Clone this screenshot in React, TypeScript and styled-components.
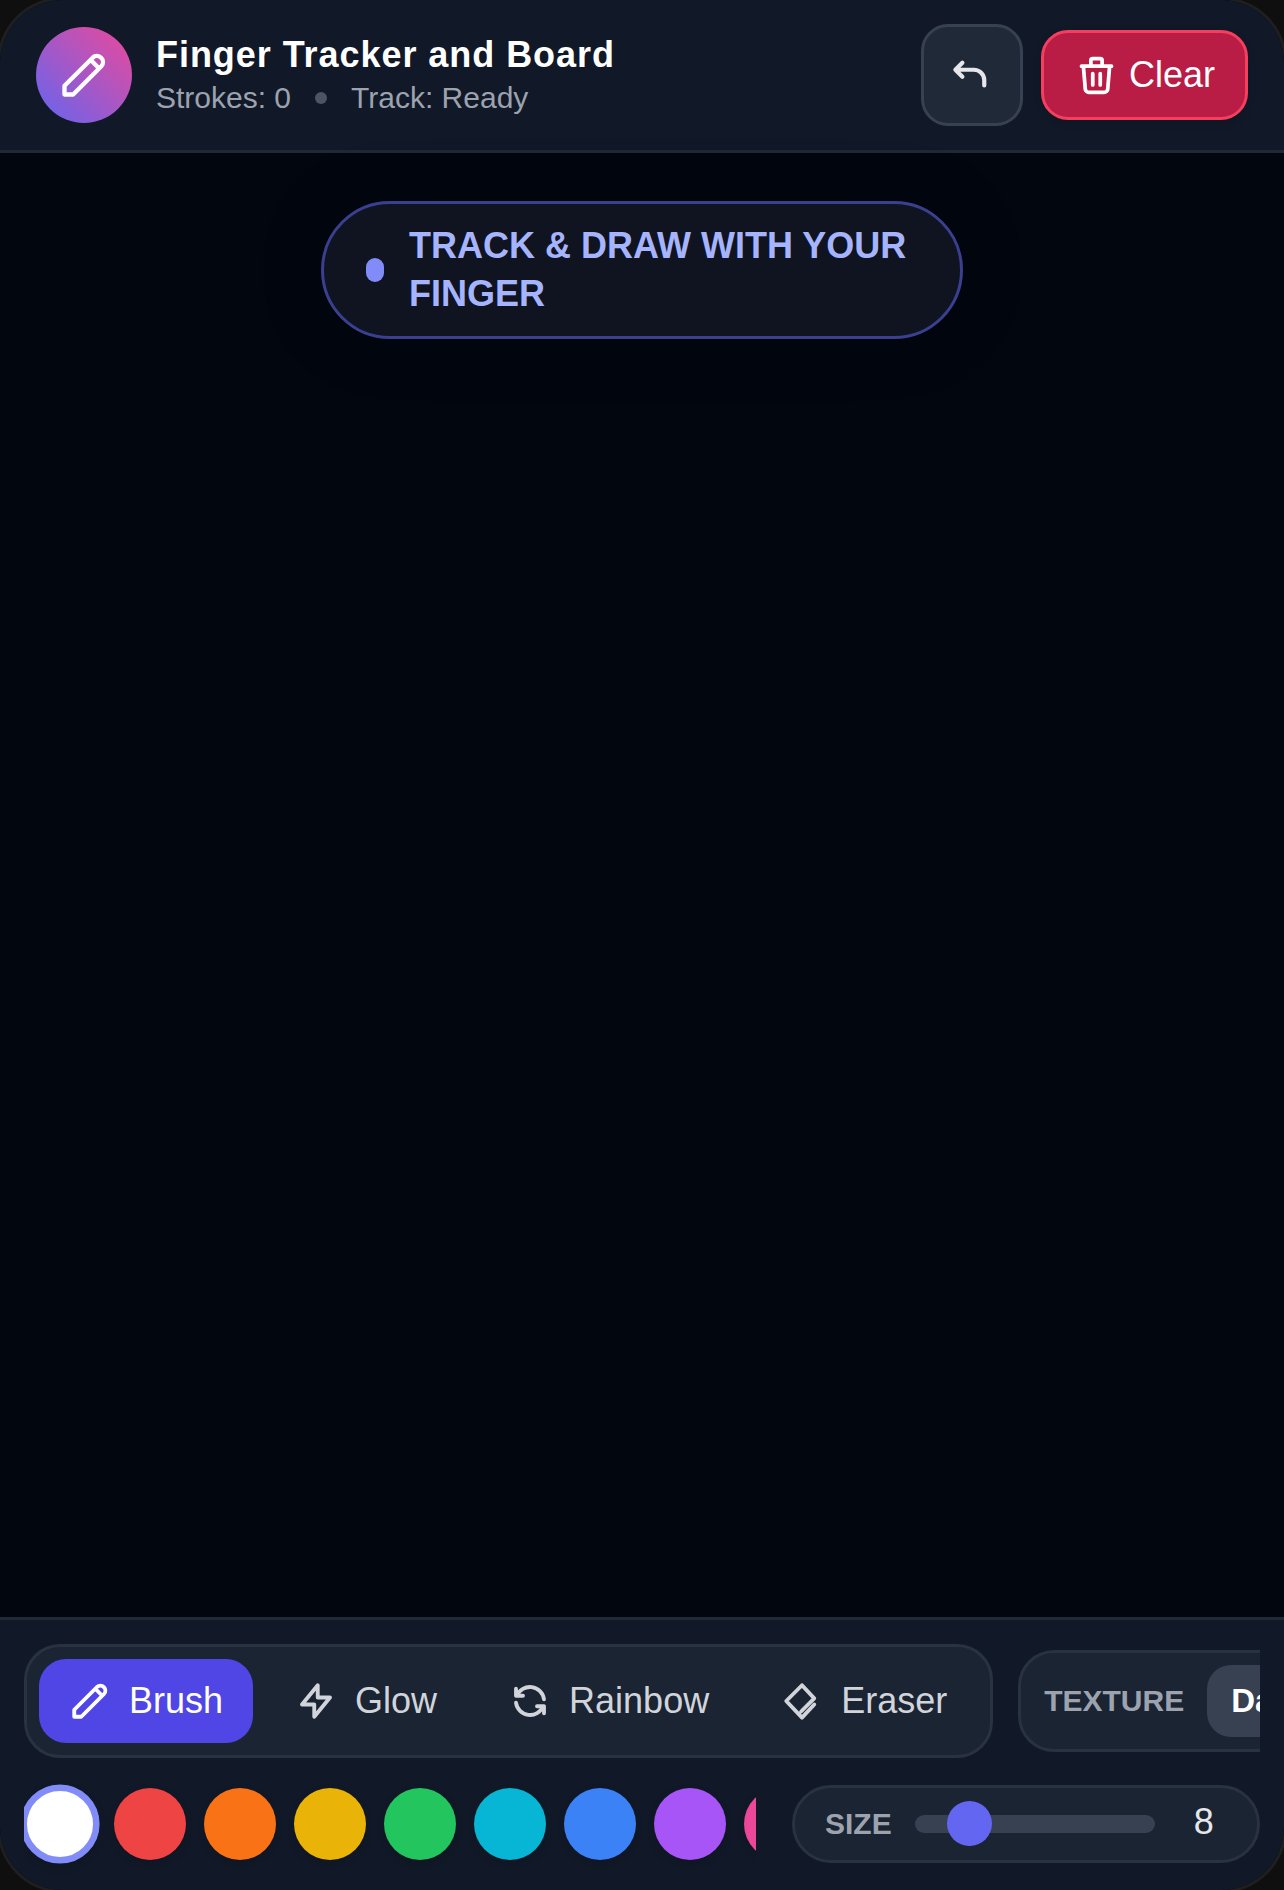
import styled, { createGlobalStyle } from "styled-components"

const GlobalStyle = createGlobalStyle`
  html, body {
    margin: 0;
    padding: 0;
    background: #0f0f0f;
  }
  * {
    box-sizing: border-box;
  }
`

const Frame = styled.div`
  width: 1284px;
  height: 1890px;
  display: flex;
  flex-direction: column;
  overflow: hidden;
  position: relative;
  background: #02060f;
  border-radius: 63px;
  box-shadow: 0 0 0 3px #1f1f1f;
  font-family: "Liberation Sans", Arial, sans-serif;
`

const Header = styled.header`
  height: 153px;
  flex-shrink: 0;
  display: flex;
  align-items: center;
  justify-content: space-between;
  padding: 0 36px;
  background: #111827;
  border-bottom: 3px solid #1f2937;
`

const Brand = styled.div`
  display: flex;
  align-items: center;
  gap: 24px;
`

const Avatar = styled.div`
  width: 96px;
  height: 96px;
  border-radius: 50%;
  display: flex;
  align-items: center;
  justify-content: center;
  color: #ffffff;
  background: linear-gradient(45deg, #6366f1, #ec4899);
`

const Titles = styled.div`
  display: flex;
  flex-direction: column;
  gap: 1px;
  padding-bottom: 3px;
`

const Title = styled.h1`
  margin: 0;
  font-size: 36px;
  line-height: 48px;
  font-weight: 700;
  letter-spacing: 0.95px;
  color: #ffffff;
`

const Meta = styled.div`
  display: flex;
  align-items: center;
  gap: 24px;
  font-size: 30px;
  line-height: 36px;
  color: #9ca3af;
`

const MetaDot = styled.span`
  width: 12px;
  height: 12px;
  border-radius: 50%;
  background: #4b5563;
`

const Actions = styled.div`
  display: flex;
  align-items: center;
  gap: 18px;
`

const UndoButton = styled.button`
  width: 102px;
  height: 102px;
  padding: 0;
  display: flex;
  align-items: center;
  justify-content: center;
  color: #e5e7eb;
  background: #1f2937;
  border: 3px solid #374151;
  border-radius: 27px;
`

const ClearButton = styled.button`
  width: 207px;
  height: 90px;
  padding: 0;
  display: flex;
  align-items: center;
  justify-content: center;
  gap: 10px;
  color: #ffffff;
  font-family: inherit;
  font-size: 36px;
  background: #b91c45;
  border: 3px solid #f43f5e;
  border-radius: 27px;
  box-shadow: 0 3px 9px rgba(0, 0, 0, 0.12);
`

const Canvas = styled.main`
  flex: 1;
  position: relative;
  background: #02060f;
`

const Hint = styled.div`
  position: absolute;
  top: 48px;
  left: 321px;
  width: 642px;
  display: flex;
  align-items: center;
  gap: 25px;
  padding: 18px 42px;
  background: #0f1420;
  border: 3px solid #3b3f8f;
  border-radius: 69px;
  box-shadow: 0 0 60px rgba(0, 0, 0, 0.3);
`

const HintDot = styled.span`
  width: 18px;
  height: 24px;
  flex-shrink: 0;
  border-radius: 9px;
  background: #818cf8;
`

const HintText = styled.span`
  font-size: 36px;
  line-height: 48px;
  font-weight: 700;
  color: #a5b4fc;
`

const Panel = styled.footer`
  flex-shrink: 0;
  display: flex;
  flex-direction: column;
  gap: 27px;
  padding: 24px 24px 27px;
  background: #111827;
  border-top: 3px solid #1f2937;
`

const TopRow = styled.div`
  display: flex;
  align-items: center;
  gap: 25px;
  overflow: hidden;
`

const ToolGroup = styled.div`
  flex-shrink: 0;
  display: flex;
  align-items: center;
  gap: 12px;
  padding: 12px 13px 12px 12px;
  background: #1b2432;
  border: 3px solid #283242;
  border-radius: 36px;
`

const ToolButton = styled.button<{ $active?: boolean }>`
  height: 84px;
  padding: 0 30px;
  display: flex;
  align-items: center;
  gap: 18px;
  font-family: inherit;
  font-size: 36px;
  color: ${prop => (prop.$active ? "#ffffff" : "#d1d5db")};
  background: ${prop => (prop.$active ? "#4f46e5" : "transparent")};
  border: 0;
  border-radius: 27px;
`

const TextureGroup = styled.div`
  flex-shrink: 0;
  display: flex;
  align-items: center;
  gap: 23px;
  padding: 12px 23px;
  background: #1b2432;
  border: 3px solid #283242;
  border-radius: 36px;
`

const GroupLabel = styled.span`
  font-size: 30px;
  font-weight: 700;
  color: #9ca3af;
`

const TextureOption = styled.button`
  height: 72px;
  padding: 0 24px;
  font-family: inherit;
  font-size: 33px;
  font-weight: 700;
  color: #ffffff;
  background: #374151;
  border: 0;
  border-radius: 24px;
`

const BottomRow = styled.div`
  display: flex;
  align-items: center;
  gap: 36px;
`

const Swatches = styled.div`
  flex: 1;
  min-width: 0;
  display: flex;
  gap: 18px;
  padding: 3px 0;
  overflow-x: clip;
  overflow-y: visible;
`

const Swatch = styled.button<{ $color: string; $selected?: boolean }>`
  width: 72px;
  height: 72px;
  flex-shrink: 0;
  padding: 0;
  border-radius: 50%;
  background: ${prop => prop.$color};
  border: ${prop => (prop.$selected ? "6px solid #818cf8" : "0")};
  transform: ${prop => (prop.$selected ? "scale(1.1)" : "none")};
  box-shadow: 0 3px 9px rgba(0, 0, 0, 0.12);
`

const SizeGroup = styled.div`
  flex-shrink: 0;
  width: 468px;
  height: 78px;
  display: flex;
  align-items: center;
  gap: 23px;
  padding: 0 29px 0 30px;
  background: #1b2432;
  border: 3px solid #283242;
  border-radius: 39px;
`

const SliderTrack = styled.div`
  position: relative;
  width: 240px;
  height: 18px;
  flex-shrink: 0;
  border-radius: 9px;
  background: #374151;
`

const SliderThumb = styled.span<{ $left: number }>`
  position: absolute;
  top: -14px;
  left: ${prop => prop.$left}px;
  width: 45px;
  height: 45px;
  border-radius: 50%;
  background: #6366f1;
`

const SizeValue = styled.span`
  width: 48px;
  flex-shrink: 0;
  margin-left: 2px;
  padding-bottom: 4px;
  text-align: center;
  font-size: 36px;
  color: #e5e7eb;
`

const Svg = styled.svg`
  flex-shrink: 0;
  fill: none;
  stroke: currentColor;
  stroke-linecap: round;
  stroke-linejoin: round;
`

const Icon = ({ d, size = 42, weight = 2.2 }: { d: string; size?: number; weight?: number }) => (
  <Svg width={size} height={size} viewBox="0 0 24 24" strokeWidth={weight}>
    <path d={d} />
  </Svg>
)

const PENCIL = "M3 21h4L20 8a2.83 2.83 0 0 0-4-4L3 17v4z M15 5l4 4"
const BOLT = "M13 3v7h7l-9 11v-7H4l9-11z"
const REFRESH = "M20 11a8.1 8.1 0 0 0-15.5-2m-.5-4v4h4 M4 13a8.1 8.1 0 0 0 15.5 2m.5 4v-4h-4"
const ERASER = "M12 3l7 7.5-7.5 7.5 M12 3L3 12l9 9.5 7-7.5"
const UNDO = "M6.5 5L2.5 9l4 4 M2.5 9H13a6 6 0 0 1 6 6v3"
const TRASH = "M4 7h16 M10 11v6 M14 11v6 M5 7l1 12a2 2 0 0 0 2 2h8a2 2 0 0 0 2-2l1-12 M9 7V4a1 1 0 0 1 1-1h4a1 1 0 0 1 1 1v3"

const tools = [
  { name: "Brush", icon: PENCIL, active: true },
  { name: "Glow", icon: BOLT },
  { name: "Rainbow", icon: REFRESH },
  { name: "Eraser", icon: ERASER },
]

const colors = ["#ffffff", "#ef4444", "#f97316", "#eab308", "#22c55e", "#06b6d4", "#3b82f6", "#a855f7", "#ec4899"]

const App = () => {
  return (
    <>
      <GlobalStyle />
      <Frame>
        <Header>
          <Brand>
            <Avatar>
              <Icon d={PENCIL} size={52} weight={2} />
            </Avatar>
            <Titles>
              <Title>Finger Tracker and Board</Title>
              <Meta>
                <span>Strokes: 0</span>
                <MetaDot />
                <span>Track: Ready</span>
              </Meta>
            </Titles>
          </Brand>
          <Actions>
            <UndoButton>
              <Icon d={UNDO} weight={2.4} />
            </UndoButton>
            <ClearButton>
              <Icon d={TRASH} size={45} weight={2} />
              Clear
            </ClearButton>
          </Actions>
        </Header>
        <Canvas>
          <Hint>
            <HintDot />
            <HintText>TRACK &amp; DRAW WITH YOUR FINGER</HintText>
          </Hint>
        </Canvas>
        <Panel>
          <TopRow>
            <ToolGroup>
              {tools.map(tool => (
                <ToolButton key={tool.name} $active={tool.active}>
                  <Icon d={tool.icon} />
                  {tool.name}
                </ToolButton>
              ))}
            </ToolGroup>
            <TextureGroup>
              <GroupLabel>TEXTURE</GroupLabel>
              <TextureOption>Dark</TextureOption>
            </TextureGroup>
          </TopRow>
          <BottomRow>
            <Swatches>
              {colors.map((color, i) => (
                <Swatch key={color} $color={color} $selected={i === 0} />
              ))}
            </Swatches>
            <SizeGroup>
              <GroupLabel>SIZE</GroupLabel>
              <SliderTrack>
                <SliderThumb $left={32} />
              </SliderTrack>
              <SizeValue>8</SizeValue>
            </SizeGroup>
          </BottomRow>
        </Panel>
      </Frame>
    </>
  )
}

export default App
